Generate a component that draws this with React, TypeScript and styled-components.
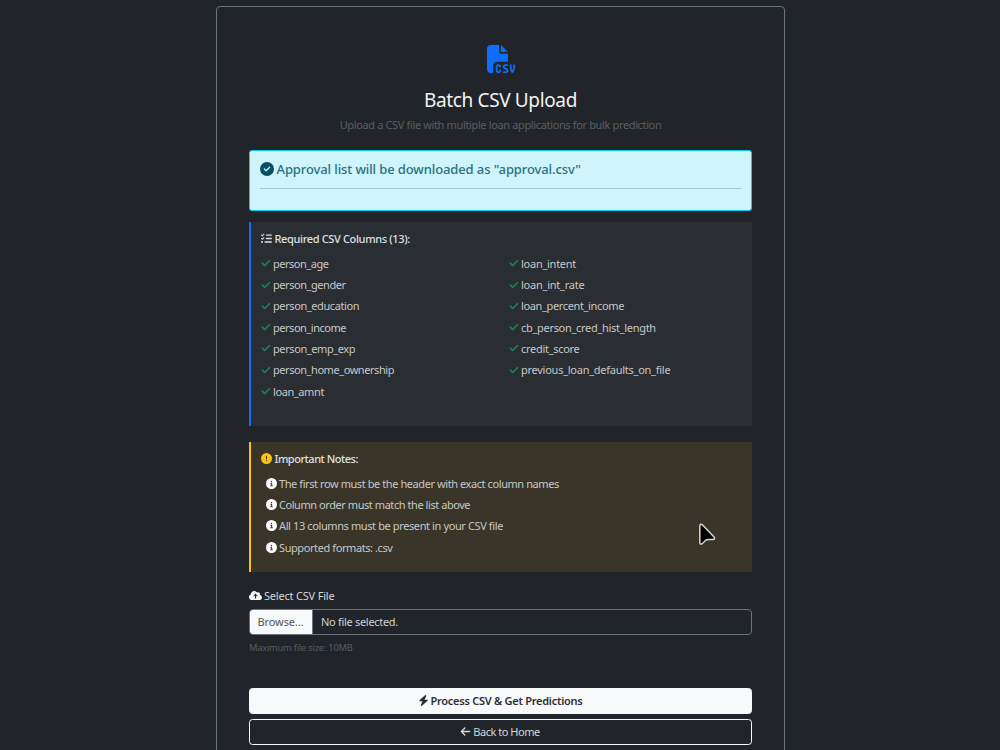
import React from "react";
import styled, { createGlobalStyle } from "styled-components";
import {
  FaArrowLeft,
  FaBolt,
  FaCheck,
  FaCircleCheck,
  FaCircleExclamation,
  FaCircleInfo,
  FaCloudArrowUp,
  FaFileCsv,
  FaListCheck,
} from "react-icons/fa6";

const GlobalStyle = createGlobalStyle`
  * { box-sizing: border-box; }
  html, body { margin: 0; padding: 0; background: #212529; overflow: hidden; }
  body { font-family: "Noto Sans", "Open Sans", sans-serif; font-size: 11px; color: #dee2e6; }
  svg { display: block; flex: none; }
`;

const Page = styled.main`
  height: 750px;
  overflow: hidden;
  padding-top: 6px;
  display: flex;
  justify-content: center;
  align-items: flex-start;
`;

const Card = styled.section`
  width: 569px;
  height: 790px;
  margin-left: 1px;
  border: 1px solid #6c757d;
  border-radius: 4px;
  padding: 38px 32px 0;
  display: flex;
  flex-direction: column;
`;

const Tracked = styled.span<{ $track: number }>`
  letter-spacing: ${(p) => p.$track}px;
  white-space: nowrap;
`;

const Header = styled.header`
  display: flex;
  flex-direction: column;
  align-items: center;
  height: 105px;
  color: #0d6efd;
`;

const Title = styled.h1`
  margin: 14px 0 0;
  font-size: 19px;
  font-weight: 400;
  line-height: 27px;
  color: #f1f2f3;
`;

const Subtitle = styled.p`
  margin: 2px 0 0;
  font-size: 11px;
  line-height: 17px;
  color: #565d64;
`;

const Alert = styled.div`
  height: 61px;
  border: 1.5px solid #0dcaf0;
  border-radius: 3px;
  background: #cff4fc;
  color: #055160;
  padding: 9px 10px 0;
`;

const AlertHeading = styled.h2`
  display: flex;
  align-items: center;
  gap: 2.5px;
  margin: 0;
  height: 18px;
  font-size: 13px;
  font-weight: 500;
  color: #2b7080;
  svg { color: #055160; }
`;

const Divider = styled.hr`
  margin: 10px 0 0;
  border: 0;
  border-top: 1px solid #a2cad4;
`;

const Panel = styled.section<{ $accent: string; $fill: string; $height: number; $gap: number }>`
  height: ${(p) => p.$height}px;
  margin-top: ${(p) => p.$gap}px;
  border-left: 2px solid ${(p) => p.$accent};
  background: ${(p) => p.$fill};
  padding: 8px 10px 0;
`;

const PanelHeading = styled.h3<{ $icon: string }>`
  display: flex;
  align-items: center;
  gap: 2.5px;
  margin: 0 0 6.6px;
  height: 16px;
  font-size: 11px;
  font-weight: 500;
  color: #dee0e3;
  svg { color: ${(p) => p.$icon}; }
`;

const Columns = styled.div`
  display: grid;
  grid-template-columns: 248px 1fr;
`;

const List = styled.ul<{ $indent?: number; $icon: string; $gap: number }>`
  list-style: none;
  margin: 0;
  padding: 0 0 0 ${(p) => p.$indent ?? 0}px;
  li {
    display: flex;
    align-items: center;
    gap: ${(p) => p.$gap}px;
    height: 21.3px;
    color: #c6c8ca;
  }
  svg { color: ${(p) => p.$icon}; }
`;

const FieldLabel = styled.label`
  display: flex;
  align-items: center;
  gap: 2px;
  height: 16px;
  margin-top: 15px;
  color: #d4d6d8;
  svg { color: #f8f9fa; }
`;

const FileInput = styled.div`
  display: flex;
  height: 26px;
  margin-top: 6px;
  border: 1px solid #6c757d;
  border-radius: 4px;
  overflow: hidden;
  line-height: 23px;
  color: #cfd1d3;
`;

const Browse = styled.span`
  width: 63px;
  padding-left: 7.5px;
  border-right: 1px solid #6c757d;
  background: #f8f9fa;
  color: #50555a;
`;

const FileName = styled.span`
  padding-left: 8px;
`;

const Help = styled.small`
  margin-top: 6px;
  height: 14px;
  font-size: 9.3px;
  line-height: 14px;
  color: #565d64;
`;

const Actions = styled.div`
  display: grid;
  gap: 5px;
  margin-top: 33px;
`;

const Button = styled.button<{ $outline?: boolean }>`
  display: flex;
  align-items: center;
  justify-content: center;
  gap: 2px;
  height: 26px;
  padding: 0 1px ${(p) => (p.$outline ? 1 : 2)}px 0;
  border: 1px solid #f8f9fa;
  border-radius: 3.5px;
  font-family: inherit;
  font-size: 11px;
  font-weight: ${(p) => (p.$outline ? 400 : 600)};
  background: ${(p) => (p.$outline ? "transparent" : "#f8f9fa")};
  color: ${(p) => (p.$outline ? "#d4d6d8" : "#2b2f33")};
`;

const Pointer = styled.svg`
  position: absolute;
  left: 698px;
  top: 522px;
`;

type Entry = [text: string, track: number];

const leftColumns: Entry[] = [
  ["person_age", -0.48],
  ["person_gender", -0.45],
  ["person_education", -0.41],
  ["person_income", -0.47],
  ["person_emp_exp", -0.41],
  ["person_home_ownership", -0.44],
  ["loan_amnt", -0.4],
];

const rightColumns: Entry[] = [
  ["loan_intent", -0.26],
  ["loan_int_rate", -0.23],
  ["loan_percent_income", -0.36],
  ["cb_person_cred_hist_length", -0.3],
  ["credit_score", -0.29],
  ["previous_loan_defaults_on_file", -0.26],
];

const notes: Entry[] = [
  ["The first row must be the header with exact column names", -0.42],
  ["Column order must match the list above", -0.44],
  ["All 13 columns must be present in your CSV file", -0.39],
  ["Supported formats: .csv", -0.41],
];

function ColumnList({ items }: { items: Entry[] }) {
  return (
    <List $icon="#198754" $gap={2}>
      {items.map(([text, track]) => (
        <li key={text}>
          <FaCheck size={10} stroke="currentColor" strokeWidth={14} />
          <Tracked $track={track}>{text}</Tracked>
        </li>
      ))}
    </List>
  );
}

export default function App() {
  return (
    <>
      <GlobalStyle />
      <Page>
        <Card>
          <Header>
            <FaFileCsv size={28} />
            <Title>
              <Tracked $track={-0.36}>Batch CSV Upload</Tracked>
            </Title>
            <Subtitle>
              <Tracked $track={-0.36}>
                Upload a CSV file with multiple loan applications for bulk prediction
              </Tracked>
            </Subtitle>
          </Header>

          <Alert>
            <AlertHeading>
              <FaCircleCheck size={14} />
              <Tracked $track={-0.11}>Approval list will be downloaded as "approval.csv"</Tracked>
            </AlertHeading>
            <Divider />
          </Alert>

          <Panel $accent="#0d6efd" $fill="#2a2d31" $height={204} $gap={11}>
            <PanelHeading $icon="#dee0e3">
              <FaListCheck size={11} />
              <Tracked $track={-0.35}>Required CSV Columns (13):</Tracked>
            </PanelHeading>
            <Columns>
              <ColumnList items={leftColumns} />
              <ColumnList items={rightColumns} />
            </Columns>
          </Panel>

          <Panel $accent="#ffc107" $fill="#393528" $height={130} $gap={16}>
            <PanelHeading $icon="#ffc107">
              <FaCircleExclamation size={11} />
              <Tracked $track={-0.48}>Important Notes:</Tracked>
            </PanelHeading>
            <List $indent={5} $icon="#ffffff" $gap={2}>
              {notes.map(([text, track]) => (
                <li key={text}>
                  <FaCircleInfo size={11} />
                  <Tracked $track={track}>{text}</Tracked>
                </li>
              ))}
            </List>
          </Panel>

          <FieldLabel>
            <FaCloudArrowUp size={13} />
            <Tracked $track={-0.2}>Select CSV File</Tracked>
          </FieldLabel>
          <FileInput>
            <Browse>
              <Tracked $track={-0.1}>Browse…</Tracked>
            </Browse>
            <FileName>
              <Tracked $track={-0.3}>No file selected.</Tracked>
            </FileName>
          </FileInput>
          <Help>
            <Tracked $track={-0.22}>Maximum file size: 10MB</Tracked>
          </Help>

          <Actions>
            <Button>
              <FaBolt size={11} />
              <Tracked $track={-0.26}>Process CSV &amp; Get Predictions</Tracked>
            </Button>
            <Button $outline>
              <FaArrowLeft size={11} />
              <Tracked $track={-0.47}>Back to Home</Tracked>
            </Button>
          </Actions>
        </Card>
      </Page>
      <Pointer width="19" height="24" viewBox="0 0 19 24">
        <path
          d="M1.8 3.8V20q0 2.7 2.2 1.8 1.2-.8 2.2-2.2 1.2-1.8 3.8-2h4.3q3-.2 2-2.4L4.6 2.9Q2.3 1.1 1.8 3.8Z"
          fill="#000"
          stroke="#d6d4cf"
          strokeWidth="1.5"
          strokeLinejoin="round"
        />
      </Pointer>
    </>
  );
}
